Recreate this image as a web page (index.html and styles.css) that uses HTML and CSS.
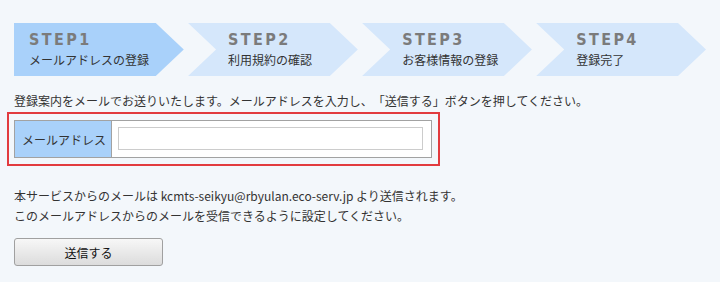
FILE: index.html
```html
<!DOCTYPE html>
<html lang="ja">
<head>
    <meta charset="UTF-8">
    <meta name="viewport" content="width=device-width, initial-scale=1.0">
    <title>メールアドレスの登録</title>
    <link rel="stylesheet" href="styles.css">
</head>
<body>
    <div class="page">
        <!-- ステップ表示 -->
        <div class="steps">
            <div class="step step-first active">
                <div class="step-num">STEP1</div>
                <div class="step-name">メールアドレスの登録</div>
            </div>
            <div class="step">
                <div class="step-num">STEP2</div>
                <div class="step-name">利用規約の確認</div>
            </div>
            <div class="step">
                <div class="step-num">STEP3</div>
                <div class="step-name">お客様情報の登録</div>
            </div>
            <div class="step">
                <div class="step-num">STEP4</div>
                <div class="step-name">登録完了</div>
            </div>
        </div>

        <p class="lead">登録案内をメールでお送りいたします。メールアドレスを入力し、「送信する」ボタンを押してください。</p>

        <div class="form-box">
            <table class="form-table">
                <tr>
                    <th>メールアドレス</th>
                    <td><input type="text" class="mail-input"></td>
                </tr>
            </table>
        </div>

        <p class="note">本サービスからのメールは kcmts-seikyu@rbyulan.eco-serv.jp より送信されます。<br>このメールアドレスからのメールを受信できるように設定してください。</p>

        <button class="send-btn">送信する</button>
    </div>
</body>
</html>
```

FILE: styles.css
```css
body {
    margin: 0;
    padding: 0;
    background-color: #f3f7fb;
    color: #333;
    font-family: "Noto Sans CJK JP", "Noto Sans", sans-serif;
    font-size: 12px;
    text-spacing-trim: space-all;
}

.page {
    padding: 23px 14px 0;
}

.steps {
    display: flex;
    gap: 4.3px;
}

.step {
    width: 170px;
    height: 53px;
    box-sizing: border-box;
    padding: 8px 0 0 40px;
    background-color: #d5e7fb;
    clip-path: polygon(0 0, calc(100% - 28px) 0, 100% 50%, calc(100% - 28px) 100%, 0 100%, 28px 50%);
}

.step-first {
    padding-left: 15px;
    clip-path: polygon(0 0, calc(100% - 28px) 0, 100% 50%, calc(100% - 28px) 100%, 0 100%);
}

.step.active {
    background-color: #a9d1fa;
}

.step-num {
    font-family: "DejaVu Sans Condensed", "DejaVu Sans", sans-serif;
    font-weight: bold;
    font-size: 16px;
    line-height: 18px;
    letter-spacing: 2.4px;
    color: #7b7b7b;
}

.step-name {
    margin-top: 3px;
    font-size: 12px;
    line-height: 16px;
    color: #333;
}

.lead {
    margin: 16px 0 0;
    line-height: 18px;
}

.form-box {
    margin: 2px 0 0 -7px;
    width: 418px;
    padding: 6px 6px 6px 5px;
    border: 2px solid #e23b3f;
}

.form-table {
    width: 100%;
    border-collapse: collapse;
    border: 1px solid #a2a2a2;
    background-color: #fff;
}

.form-table th {
    width: 89px;
    padding: 0 0 0 7px;
    text-align: left;
    font-weight: normal;
    font-size: 12px;
    background-color: #a9d1fa;
    border-right: 1px solid #a2a2a2;
}

.form-table td {
    padding: 6px 7px 7px 6px;
}

.mail-input {
    display: block;
    width: 305px;
    height: 23px;
    box-sizing: border-box;
    margin: 0;
    border: 1px solid #cccccc;
    background-color: #fff;
}

.note {
    margin: 20px 0 0;
    line-height: 20px;
}

.send-btn {
    display: block;
    margin-top: 12px;
    width: 149px;
    height: 28px;
    border: 1px solid #a0a0a0;
    border-radius: 3px;
    background: linear-gradient(#f7f7f7, #dcdcdc);
    font-family: "Noto Sans CJK JP", sans-serif;
    font-size: 12px;
    color: #111;
    cursor: pointer;
}
```
